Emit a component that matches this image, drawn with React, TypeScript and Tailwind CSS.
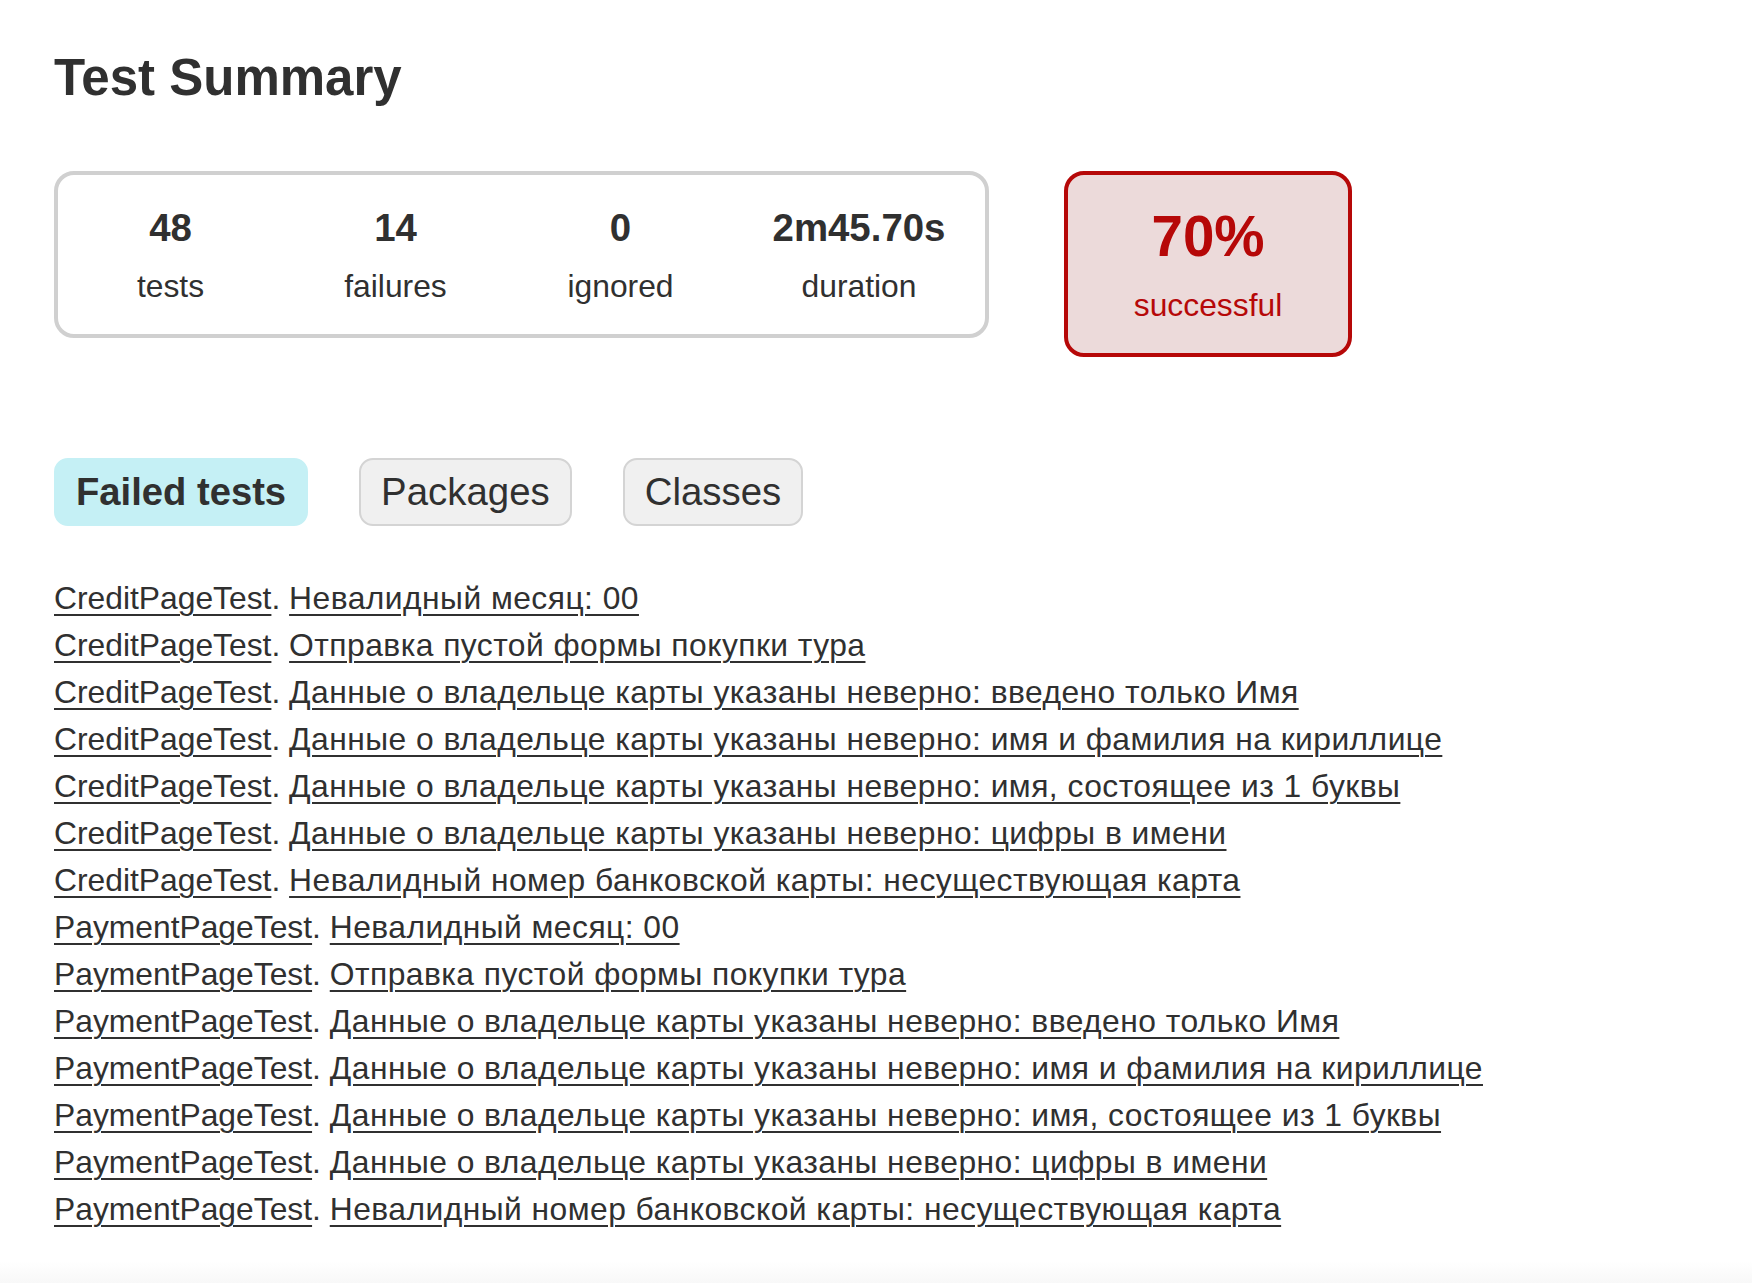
const failed: [string, string][] = [
  ['CreditPageTest', 'Невалидный месяц: 00'],
  ['CreditPageTest', 'Отправка пустой формы покупки тура'],
  ['CreditPageTest', 'Данные о владельце карты указаны неверно: введено только Имя'],
  ['CreditPageTest', 'Данные о владельце карты указаны неверно: имя и фамилия на кириллице'],
  ['CreditPageTest', 'Данные о владельце карты указаны неверно: имя, состоящее из 1 буквы'],
  ['CreditPageTest', 'Данные о владельце карты указаны неверно: цифры в имени'],
  ['CreditPageTest', 'Невалидный номер банковской карты: несуществующая карта'],
  ['PaymentPageTest', 'Невалидный месяц: 00'],
  ['PaymentPageTest', 'Отправка пустой формы покупки тура'],
  ['PaymentPageTest', 'Данные о владельце карты указаны неверно: введено только Имя'],
  ['PaymentPageTest', 'Данные о владельце карты указаны неверно: имя и фамилия на кириллице'],
  ['PaymentPageTest', 'Данные о владельце карты указаны неверно: имя, состоящее из 1 буквы'],
  ['PaymentPageTest', 'Данные о владельце карты указаны неверно: цифры в имени'],
  ['PaymentPageTest', 'Невалидный номер банковской карты: несуществующая карта'],
];

const counters = [
  { value: '48', label: 'tests', width: 'w-[225px]' },
  { value: '14', label: 'failures', width: 'w-[225px]' },
  { value: '0', label: 'ignored', width: 'w-[225px]' },
  { value: '2m45.70s', label: 'duration', width: 'w-[252px]' },
];

function InfoBox({ value, label, width }: { value: string; label: string; width: string }) {
  return (
    <div className={`${width} pb-[30px] pt-[31px] text-center`}>
      <p className="mb-[18px] text-[38.4px] font-bold leading-[44px]">{value}</p>
      <p className="text-[31.8px] leading-[36px]">{label}</p>
    </div>
  );
}

export default function App() {
  return (
    <div className="relative min-h-[1283px] overflow-hidden bg-white pl-[54px] pt-[49px] text-[#303030] [font-family:'Liberation_Sans',Arial,sans-serif]">
      <h1 className="text-[51px] font-bold leading-[58px]">Test Summary</h1>

      <div className="mt-[64px] flex items-start">
        <div className="flex rounded-[20px] border-[4px] border-[#d0d0d0]">
          {counters.map((c) => (
            <InfoBox key={c.label} {...c} />
          ))}
        </div>
        <div className="ml-[75px] w-[288px] rounded-[20px] border-[4px] border-[#b60808] bg-[#ecdada] pb-[30px] pt-[29px] text-center text-[#b60808]">
          <p className="mb-[18px] text-[56.5px] font-bold leading-[65px]">70%</p>
          <p className="text-[31.8px] leading-[36px]">successful</p>
        </div>
      </div>

      <ul className="mt-[101px] flex gap-[51px]">
        <li className="rounded-[14px] border-2 border-[#c5f0f5] bg-[#c5f0f5] px-[20px] py-[10px]">
          <h2 className="text-[38.2px] font-bold leading-[44px]">Failed tests</h2>
        </li>
        <li className="rounded-[14px] border-2 border-[#d4d4d4] bg-[#f0f0f0] px-[20px] py-[10px]">
          <a className="block text-[38.4px] leading-[44px]">Packages</a>
        </li>
        <li className="rounded-[14px] border-2 border-[#d4d4d4] bg-[#f0f0f0] px-[20px] py-[10px]">
          <a className="block text-[38.4px] leading-[44px]">Classes</a>
        </li>
      </ul>

      <ul className="mt-[54px]">
        {failed.map(([cls, name], i) => (
          <li key={i} className="mb-[10px] text-[31.8px] leading-[37px]">
            <a className="underline decoration-2 underline-offset-[5px]">{cls}</a>.{' '}
            <a className="tracking-[0.46px] underline decoration-2 underline-offset-[5px]">{name}</a>
          </li>
        ))}
      </ul>

      <div className="absolute bottom-0 left-0 right-0 h-[22px] bg-gradient-to-b from-white to-[#f8f8f8]" />
    </div>
  );
}
